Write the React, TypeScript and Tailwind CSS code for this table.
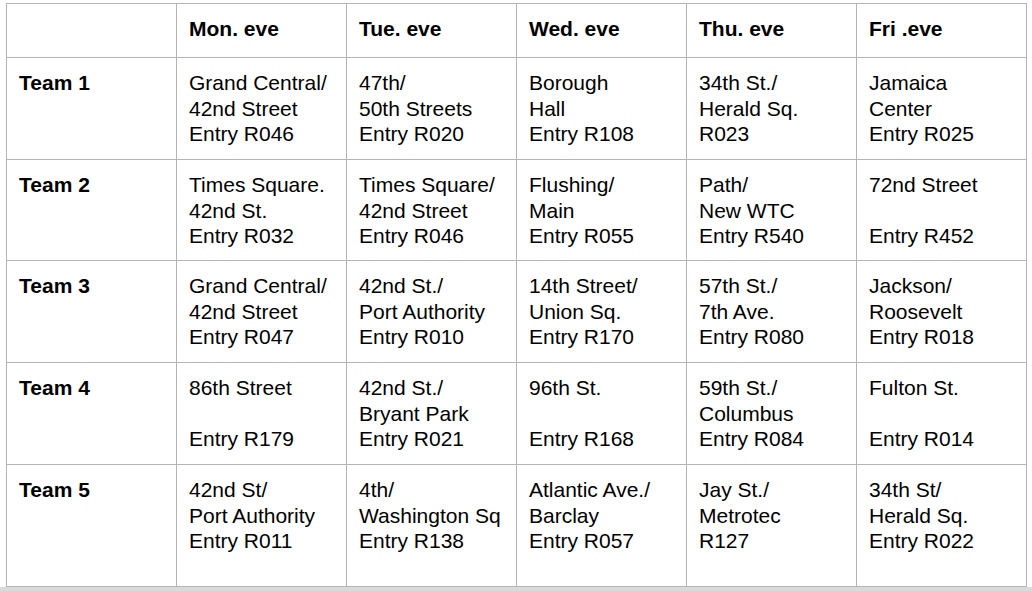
import { Fragment } from 'react';

const days = ['Mon. eve', 'Tue. eve', 'Wed. eve', 'Thu. eve', 'Fri .eve'];

const teams: { name: string; cells: string[][] }[] = [
  {
    name: 'Team 1',
    cells: [
      ['Grand Central/', '42nd Street', 'Entry R046'],
      ['47th/', '50th Streets', 'Entry R020'],
      ['Borough', 'Hall', 'Entry R108'],
      ['34th St./', 'Herald Sq.', 'R023'],
      ['Jamaica', 'Center', 'Entry R025'],
    ],
  },
  {
    name: 'Team 2',
    cells: [
      ['Times Square.', '42nd St.', 'Entry R032'],
      ['Times Square/', '42nd Street', 'Entry R046'],
      ['Flushing/', 'Main', 'Entry R055'],
      ['Path/', 'New WTC', 'Entry R540'],
      ['72nd Street', '', 'Entry R452'],
    ],
  },
  {
    name: 'Team 3',
    cells: [
      ['Grand Central/', '42nd Street', 'Entry R047'],
      ['42nd St./', 'Port Authority', 'Entry R010'],
      ['14th Street/', 'Union Sq.', 'Entry R170'],
      ['57th St./', '7th Ave.', 'Entry R080'],
      ['Jackson/', 'Roosevelt', 'Entry R018'],
    ],
  },
  {
    name: 'Team 4',
    cells: [
      ['86th Street', '', 'Entry R179'],
      ['42nd St./', 'Bryant Park', 'Entry R021'],
      ['96th St.', '', 'Entry R168'],
      ['59th St./', 'Columbus', 'Entry R084'],
      ['Fulton St.', '', 'Entry R014'],
    ],
  },
  {
    name: 'Team 5',
    cells: [
      ['42nd St/', 'Port Authority', 'Entry R011'],
      ['4th/', 'Washington Sq', 'Entry R138'],
      ['Atlantic Ave./', 'Barclay', 'Entry R057'],
      ['Jay St./', 'Metrotec', 'R127'],
      ['34th St/', 'Herald Sq.', 'Entry R022'],
    ],
  },
];

// last row is taller in the original sheet
const rowHeights = ['h-[102px]', 'h-[101px]', 'h-[102px]', 'h-[102px]', 'h-[122px]'];

const cell = 'border-r border-b border-[#b4b4b4] pl-3 pt-3 overflow-hidden whitespace-nowrap';

export default function App() {
  return (
    <div
      className="h-screen flex flex-col bg-white text-black text-[21px] leading-[25.5px]"
      style={{ fontFamily: '"Liberation Sans", Arial, sans-serif' }}
    >
      <div className="ml-[6px] mt-[3px] w-[1021px] grid grid-cols-[repeat(6,170px)] border-t border-l border-[#b4b4b4]">
        <div className={`${cell} h-[54px]`} />
        {days.map((d) => (
          <div key={d} className={`${cell} h-[54px] font-bold`}>
            {d}
          </div>
        ))}
        {teams.map((t, i) => (
          <Fragment key={t.name}>
            <div className={`${cell} ${rowHeights[i]} font-bold`}>{t.name}</div>
            {t.cells.map((lines, j) => (
              <div key={j} className={`${cell} ${rowHeights[i]}`}>
                {lines.map((l, k) => (
                  <div key={k} className="h-[25.5px]">
                    {l}
                  </div>
                ))}
              </div>
            ))}
          </Fragment>
        ))}
      </div>
      <div className="flex-1 bg-[#dadada]" />
    </div>
  );
}
